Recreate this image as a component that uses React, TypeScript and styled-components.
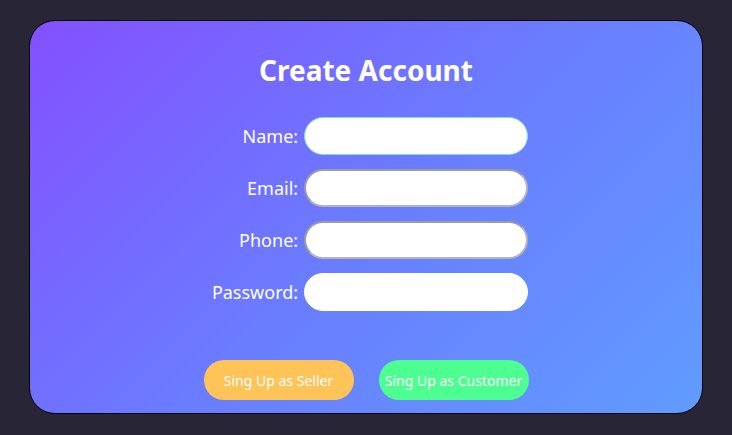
import * as React from "react";
import styled, { createGlobalStyle } from "styled-components";

const GlobalStyle = createGlobalStyle`
  html, body {
    margin: 0;
    padding: 0;
    background: #282636;
    font-family: "Noto Sans", "Open Sans", sans-serif;
  }
`;

const fields = [
  { label: "Name", type: "text", tone: "focus" },
  { label: "Email", type: "email", tone: "inset" },
  { label: "Phone", type: "tel", tone: "inset" },
  { label: "Password", type: "password", tone: "plain" },
];

function App() {
  return (
    <>
      <GlobalStyle />
      <Page>
        <Card>
          <Title>Create Account</Title>
          <Form>
            {fields.map((f) => (
              <React.Fragment key={f.label}>
                <Label htmlFor={f.label}>{f.label}:</Label>
                <Input id={f.label} type={f.type} $tone={f.tone} />
              </React.Fragment>
            ))}
          </Form>
          <Buttons>
            <Button $bg="#ffc457">Sing Up as Seller</Button>
            <Button $bg="#4dff91">Sing Up as Customer</Button>
          </Buttons>
        </Card>
      </Page>
    </>
  );
}
export default App;

const Page = styled.div`
  padding: 20px 29px 0 29px;
`;

const Card = styled.div`
  box-sizing: border-box;
  height: 394px;
  border: 1px solid #000;
  border-radius: 26px;
  background: linear-gradient(135deg, #8450ff 0%, #6a7cff 50%, #609cff 100%);
  display: flex;
  flex-direction: column;
  align-items: center;
  padding-top: 30px;
`;

const Title = styled.h1`
  margin: 0;
  color: #fff;
  font-size: 28px;
  font-weight: 700;
  line-height: 38px;
`;

const Form = styled.div`
  margin-top: 28px;
  display: grid;
  grid-template-columns: auto 224px;
  column-gap: 6px;
  row-gap: 14px;
  align-items: center;
  transform: translateX(4px);
`;

const Label = styled.label`
  color: #fff;
  font-size: 18px;
  text-align: right;
`;

const Input = styled.input<{ $tone: string }>`
  box-sizing: border-box;
  width: 224px;
  height: 38px;
  border-radius: 19px;
  background: #fff;
  outline: none;
  padding: 0 14px;
  font-size: 16px;
  border: ${(p) =>
    p.$tone === "focus"
      ? "1px solid #7fd8f0"
      : p.$tone === "inset"
      ? "2px solid #b4b4bc"
      : "1px solid #fff"};
  border-top-color: ${(p) => (p.$tone === "inset" ? "#9c9ca4" : "")};
  border-left-color: ${(p) => (p.$tone === "inset" ? "#9c9ca4" : "")};
`;

const Buttons = styled.div`
  margin-top: 49px;
  display: flex;
  gap: 25px;
`;

const Button = styled.button<{ $bg: string }>`
  width: 150px;
  height: 40px;
  border: none;
  border-radius: 20px;
  background: ${(p) => p.$bg};
  color: #fff;
  font-family: inherit;
  font-size: 14px;
  padding: 0;
  cursor: pointer;
`;
